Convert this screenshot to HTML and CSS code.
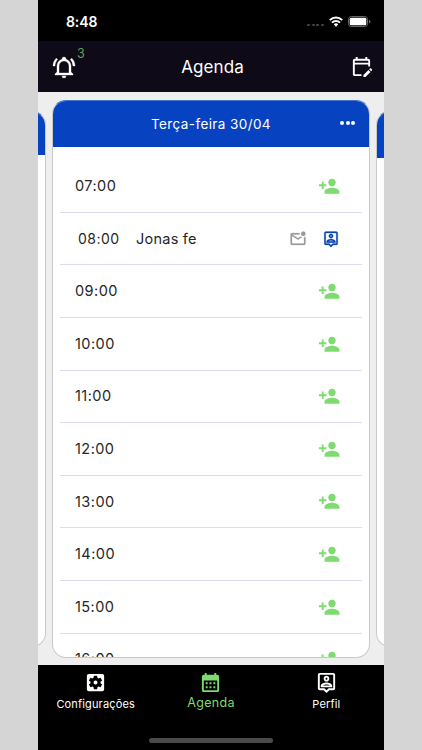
FILE: index.html
```html
<!DOCTYPE html>
<html lang="pt-BR">
<head>
<meta charset="utf-8">
<title>Agenda</title>
<link rel="stylesheet" href="styles.css">
</head>
<body>
<svg class="defs" aria-hidden="true">
  <symbol id="add" viewBox="0 0 24 24"><path d="M15 12c2.21 0 4-1.79 4-4s-1.79-4-4-4-4 1.79-4 4 1.79 4 4 4zM6 10V7H4v3H1v2h3v3h2v-3h3v-2H6zm9 3.6c-2.67 0-8 1.34-8 4.4v2h16v-2c0-3.06-5.33-4.4-8-4.4z"/></symbol>
  <symbol id="pin" viewBox="0 0 24 24"><path fill-rule="evenodd" d="M19 2H5a2 2 0 0 0-2 2v14a2 2 0 0 0 2 2h4l3 3 3-3h4a2 2 0 0 0 2-2V4a2 2 0 0 0-2-2zm0 16h-4.83L12 20.17 9.83 18H5V4h14v14zM12 11c1.65 0 3-1.35 3-3s-1.35-3-3-3-3 1.35-3 3 1.35 3 3 3zm0-4c.55 0 1 .45 1 1s-.45 1-1 1-1-.45-1-1 .45-1 1-1zm6 8.58c0-2.5-3.97-3.58-6-3.58s-6 1.08-6 3.58V17h12v-1.42zM8.48 15c.74-.51 2.23-1 3.52-1s2.78.49 3.52 1H8.48z"/></symbol>
</svg>
<div class="phone">
  <div class="status">
    <span class="clock">8:48</span>
    <span class="signal"><i></i><i></i><i></i><i></i></span>
    <svg class="wifi" viewBox="0 0 14 11"><g fill="none" stroke="#fff" stroke-width="2"><path d="M.8 4.1a8.8 8.8 0 0 1 12.4 0"/><path d="M3 6.6a5.7 5.7 0 0 1 8 0"/></g><path fill="#fff" d="M4.8 8.3a3.2 3.2 0 0 1 4.4 0L7 10.7z"/></svg>
    <svg class="battery" viewBox="0 0 23 11"><rect x=".5" y=".5" width="19" height="10" rx="2.8" fill="none" stroke="#666"/><rect x="1.7" y="1.7" width="16.6" height="7.6" rx="1.5" fill="#fff"/><path d="M21 3.7q1.5.4 1.5 1.8T21 7.3z" fill="#666"/></svg>
  </div>
  <header class="topbar">
    <div class="alerts">
      <svg class="bell" viewBox="0 0 24 24"><path fill="currentColor" stroke="currentColor" stroke-width=".35" d="M10 21h4a2 2 0 0 1-4 0M21 19v1H3v-1l2-2v-6c0-3.1 2.03-5.83 5-6.71V4a2 2 0 0 1 4 0v.29c2.97.88 5 3.61 5 6.71v6l2 2M17 11a5 5 0 0 0-10 0v7h10v-7M19.75 3.19l-1.42 1.42A8.98 8.98 0 0 1 21 11h2c0-2.93-1.16-5.75-3.25-7.81M1 11h2c0-2.4.96-4.7 2.67-6.39L4.25 3.19A10.96 10.96 0 0 0 1 11z"/></svg>
      <span class="count">3</span>
    </div>
    <h1>Agenda</h1>
    <svg class="edit" viewBox="0 0 24 24"><path fill="currentColor" fill-rule="evenodd" d="M12 22H5c-1.11 0-2-.9-2-2V6c0-1.1.9-2 2-2h1V2h2v2h8V2h2v2h1c1.1 0 2 .9 2 2v6h-2v-2H5v10h7v2zM5 6v2h14V6H5zm17.13 10.99.71-.71a1 1 0 0 0 0-1.41l-.71-.71a1 1 0 0 0-1.41 0l-.71.71 2.12 2.12zm-.71.71-5.3 5.3H14v-2.12l5.3-5.3 2.12 2.12z"/></svg>
  </header>
  <main class="carousel">
    <section class="card side prev"><div class="day"></div></section>
    <section class="card current">
      <div class="day"><h2>Terça-feira 30/04</h2><span class="more"><i></i><i></i><i></i></span></div>
      <ul class="slots">
        <li><time>07:00</time><svg class="add"><use href="#add"/></svg></li>
        <li class="booked"><time>08:00</time><span class="name">Jonas fe</span><svg class="mail" viewBox="0 0 24 24"><path fill="currentColor" d="M22 8.98V18c0 1.1-.9 2-2 2H4c-1.1 0-2-.9-2-2V6c0-1.1.9-2 2-2h10.1a5 5 0 0 0 0 2H4l8 5 3.67-2.29c.47.43 1.02.76 1.63.98L12 13 4 8v10h16V9.9c.74-.15 1.42-.48 2-.92zM16 5a3 3 0 1 0 6 0 3 3 0 0 0-6 0z"/></svg><svg class="person"><use href="#pin"/></svg></li>
        <li><time>09:00</time><svg class="add"><use href="#add"/></svg></li>
        <li><time>10:00</time><svg class="add"><use href="#add"/></svg></li>
        <li><time>11:00</time><svg class="add"><use href="#add"/></svg></li>
        <li><time>12:00</time><svg class="add"><use href="#add"/></svg></li>
        <li><time>13:00</time><svg class="add"><use href="#add"/></svg></li>
        <li><time>14:00</time><svg class="add"><use href="#add"/></svg></li>
        <li><time>15:00</time><svg class="add"><use href="#add"/></svg></li>
        <li><time>16:00</time><svg class="add"><use href="#add"/></svg></li>
      </ul>
    </section>
    <section class="card side next"><div class="day"></div></section>
  </main>
  <footer class="bottom">
    <nav>
      <a><svg viewBox="0 0 24 24"><path fill="currentColor" fill-rule="evenodd" d="M5 3h14a2 2 0 0 1 2 2v14a2 2 0 0 1-2 2H5a2 2 0 0 1-2-2V5a2 2 0 0 1 2-2zm12.25 9c0-.23-.02-.46-.05-.68l1.48-1.16c.13-.11.17-.3.08-.45l-1.4-2.42a.35.35 0 0 0-.43-.15l-1.74.7a5.1 5.1 0 0 0-1.18-.69l-.26-1.85A.36.36 0 0 0 13.4 5h-2.8c-.17 0-.32.13-.35.3l-.26 1.85c-.43.18-.82.41-1.18.69l-1.74-.7a.35.35 0 0 0-.43.15l-1.4 2.42c-.09.15-.05.34.08.45l1.48 1.16a5.3 5.3 0 0 0 0 1.36l-1.48 1.16a.35.35 0 0 0-.08.45l1.4 2.42c.09.15.27.21.43.15l1.74-.7c.36.28.75.51 1.18.69l.26 1.85c.03.17.18.3.35.3h2.8c.17 0 .32-.13.35-.3l.26-1.85c.43-.18.82-.41 1.18-.69l1.74.7c.16.06.34 0 .43-.15l1.4-2.42a.35.35 0 0 0-.08-.45l-1.48-1.16c.03-.22.05-.45.05-.68zM12 9.9a2.1 2.1 0 1 1 0 4.2 2.1 2.1 0 0 1 0-4.2z"/></svg><span>Configurações</span></a>
      <a class="active"><svg viewBox="0 0 24 24"><path fill="currentColor" fill-rule="evenodd" d="M19 4h-1V2h-2v2H8V2H6v2H5a2 2 0 0 0-2 2v14a2 2 0 0 0 2 2h14a2 2 0 0 0 2-2V6a2 2 0 0 0-2-2zm0 16H5V10h14v10zM7 11.7h2v2H7zm4 0h2v2h-2zm4 0h2v2h-2zM7 16h2v2H7zm4 0h2v2h-2zm4 0h2v2h-2z"/></svg><span>Agenda</span></a>
      <a><svg><use href="#pin"/></svg><span>Perfil</span></a>
    </nav>
    <div class="home"></div>
  </footer>
</div>
</body>
</html>
```
FILE: styles.css
```css
* { box-sizing: border-box; }
body {
  margin: 0;
  height: 750px;
  overflow: hidden;
  background: #d5d5d5;
  font-family: Inter, "Liberation Sans", sans-serif;
}
.defs { display: none; }
h1, h2, ul { margin: 0; padding: 0; font-weight: 400; }
svg { display: block; flex: none; fill: currentColor; }
.phone {
  width: 346px;
  height: 750px;
  margin: 0 auto;
  display: flex;
  flex-direction: column;
  background: #eee;
}
.status {
  height: 41px;
  flex: none;
  display: flex;
  align-items: center;
  padding: 2px 13px 0 28px;
  background: #000;
  color: #fff;
}
.clock { font-size: 14px; font-weight: 600; line-height: 18px; letter-spacing: -.1px; margin-right: auto; }
.signal { display: flex; gap: 1.6px; margin: 7px 5px 0 0; }
.signal i { width: 3px; height: 2.5px; border-radius: 1px; background: #454545; }
.wifi { width: 14px; height: 11px; margin-right: 5px; }
.battery { width: 23px; height: 11px; }
.topbar {
  height: 51px;
  flex: none;
  display: grid;
  grid-template-columns: 60px 1fr 60px;
  align-items: center;
  padding: 0 11px 0 14px;
  background: #0e0a17;
  color: #fff;
}
.alerts { display: flex; align-items: center; }
.bell { width: 24px; height: 24px; }
.count { color: #62a058; font-size: 12.5px; line-height: 14px; margin: -25px 0 0 1px; }
h1 { font-size: 17px; line-height: 24px; text-align: center; letter-spacing: .1px; }
.edit { width: 23px; height: 23px; justify-self: end; }
.carousel {
  flex: 1;
  min-height: 0;
  overflow: hidden;
  display: flex;
  justify-content: center;
  gap: 6px;
  padding-top: 8px;
  align-items: flex-start;
}
.card {
  flex: none;
  width: 318px;
  height: 558px;
  border: 1px solid #c9c9c9;
  border-radius: 14px;
  overflow: hidden;
  background: #fff;
}
.current { border-top-color: #4a74cc; }
.side { height: 536px; margin-top: 11px; border-top-color: #4a74cc; }
.day {
  height: 46px;
  margin: -1px -1px 0;
  background: #0743c0;
  color: #fff;
  display: grid;
  grid-template-columns: 40px 1fr 40px;
  align-items: center;
}
.current .day { height: 46.5px; }
.prev .day { height: 44px; }
.next .day { height: 47px; }
h2 { grid-column: 2; text-align: center; font-size: 13.5px; line-height: 18px; letter-spacing: .4px; padding-top: 1px; }
.more { display: flex; gap: 1.7px; justify-self: start; margin-left: 10px; }
.more i { width: 4px; height: 4px; border-radius: 50%; background: #fff; }
.slots { list-style: none; padding: 13.7px 7px 0; }
.slots li {
  height: 52.6px;
  display: flex;
  align-items: center;
  padding: 0 22px 0 15px;
  border-bottom: 1px solid #d9dcf2;
  color: #262626;
  font-size: 14.5px;
  line-height: 20px;
  letter-spacing: .45px;
}
time { margin-right: auto; }
.add { width: 22.4px; height: 22.4px; color: #7ddb70; }
.slots .booked { padding: 0 22px 0 18px; }
.booked time { font-size: 14px; margin-right: 16.5px; }
.name { margin-right: auto; letter-spacing: .25px; }
.mail { width: 18px; height: 18px; color: #999; margin-right: 15px; }
.mail path { stroke: currentColor; stroke-width: .3; }
.person { width: 18px; height: 18px; color: #0743b5; stroke: currentColor; stroke-width: .3; }
.bottom {
  height: 85px;
  flex: none;
  display: flex;
  flex-direction: column;
  align-items: center;
  justify-content: space-between;
  padding-bottom: 7px;
  background: #000;
}
nav { display: grid; grid-template-columns: repeat(3, 1fr); width: 100%; padding-top: 6px; }
nav a { display: flex; flex-direction: column; align-items: center; color: #fff; font-size: 11px; line-height: 14px; letter-spacing: .15px; }
nav svg { width: 23px; height: 23px; margin-bottom: 3px; }
nav .active { color: #7ddb70; font-size: 12.5px; letter-spacing: .3px; }
nav .active svg { margin-bottom: 2px; }
.home { width: 124px; height: 5px; border-radius: 3px; background: #4a4a4a; }
```
